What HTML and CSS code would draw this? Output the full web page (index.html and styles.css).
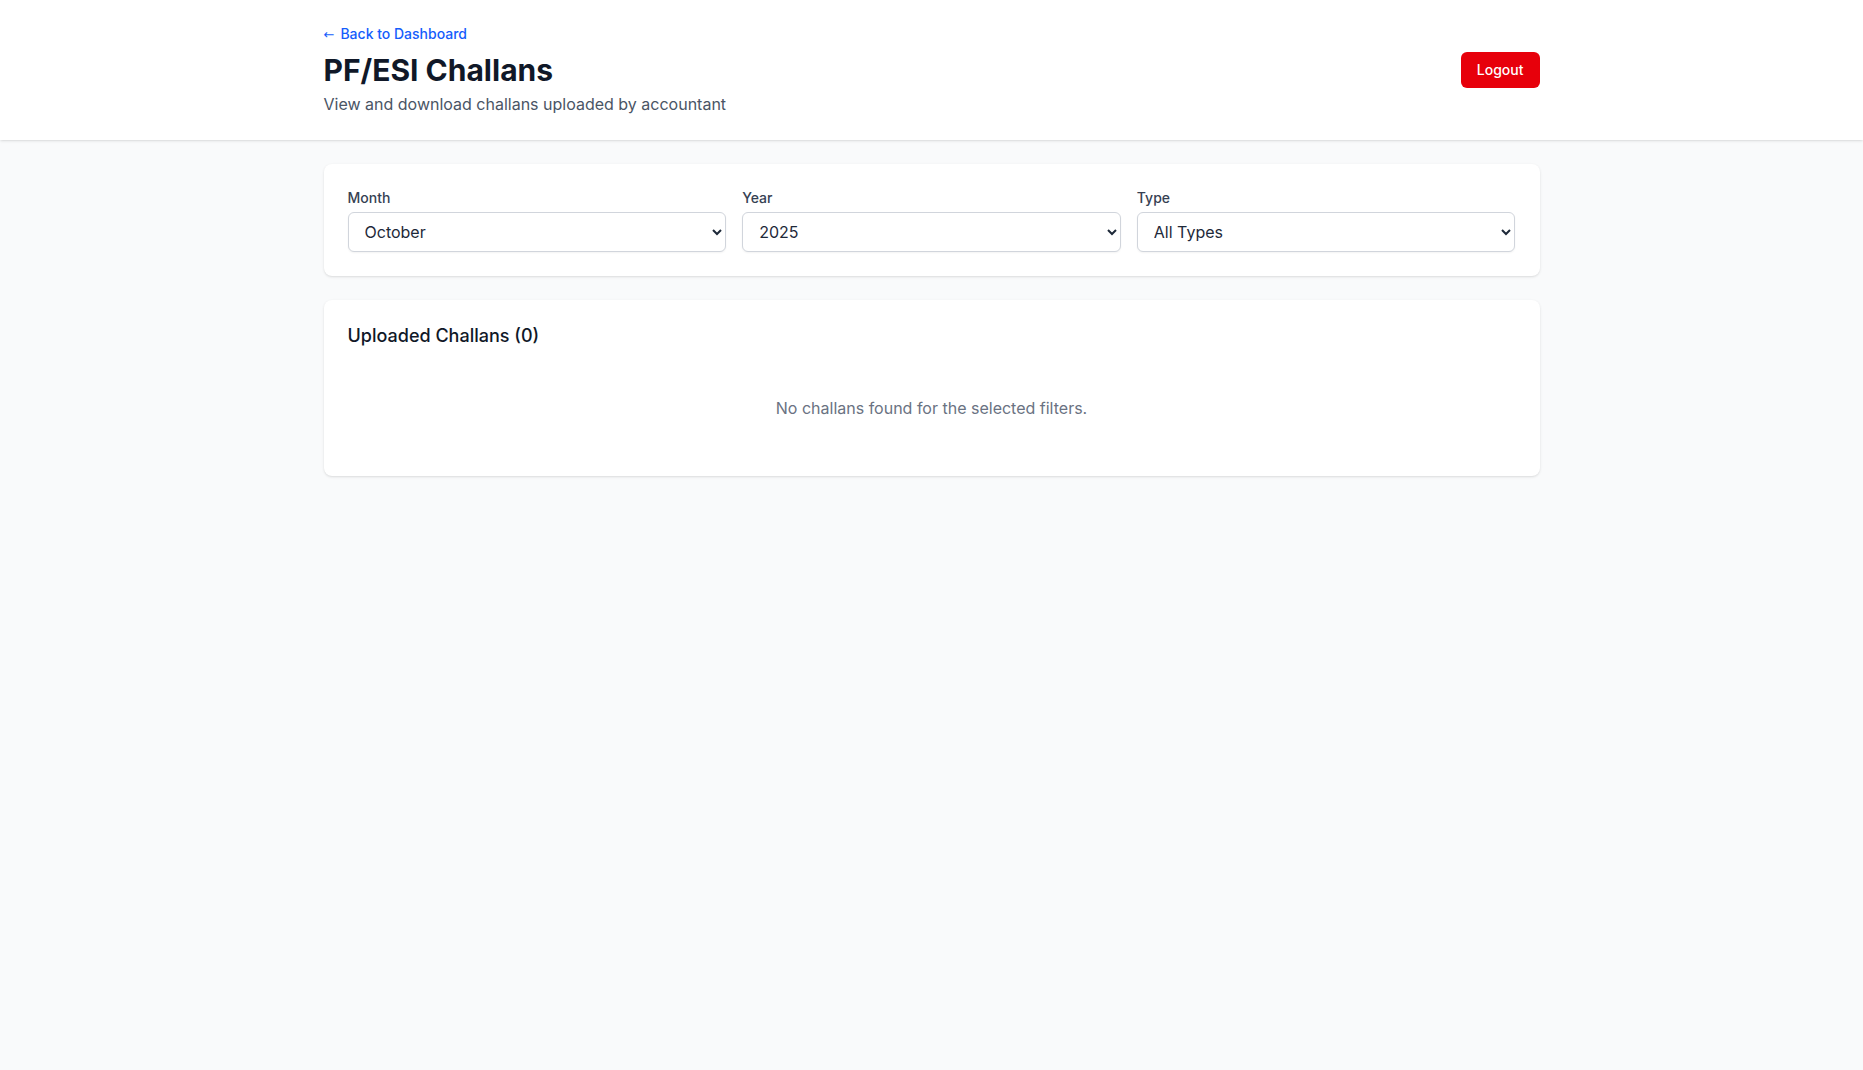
FILE: index.html
```html
<!DOCTYPE html>
<html lang="en">
<head>
<meta charset="utf-8">
<title>PF/ESI Challans</title>
<link rel="stylesheet" href="styles.css">
</head>
<body>
<header class="header">
  <div class="container header-inner">
    <div class="header-text">
      <a class="back-link" href="#"><span class="arrow">←</span> Back to Dashboard</a>
      <h1 class="title">PF/ESI Challans</h1>
      <p class="subtitle">View and download challans uploaded by accountant</p>
    </div>
    <button class="logout" type="button">Logout</button>
  </div>
</header>
<main class="container main">
  <section class="card filters">
    <div class="field">
      <label class="label" for="month">Month</label>
      <select id="month" class="select">
        <option>January</option><option>February</option><option>March</option>
        <option>April</option><option>May</option><option>June</option>
        <option>July</option><option>August</option><option>September</option>
        <option selected>October</option><option>November</option><option>December</option>
      </select>
    </div>
    <div class="field">
      <label class="label" for="year">Year</label>
      <select id="year" class="select">
        <option>2023</option><option>2024</option><option selected>2025</option><option>2026</option>
      </select>
    </div>
    <div class="field">
      <label class="label" for="type">Type</label>
      <select id="type" class="select">
        <option selected>All Types</option><option>PF</option><option>ESI</option>
      </select>
    </div>
  </section>
  <section class="card list">
    <h2 class="list-title">Uploaded Challans (0)</h2>
    <div class="empty">No challans found for the selected filters.</div>
  </section>
</main>
</body>
</html>
```
FILE: styles.css
```css
* { box-sizing: border-box; }
html, body { margin: 0; padding: 0; }
body {
  font-family: Inter, "Noto Sans", "Liberation Sans", sans-serif;
  background: #f9fafb;
  color: #101828;
  min-height: 100vh;
}
.container {
  max-width: 1280px;
  margin: 0 auto;
  padding-left: 32px;
  padding-right: 32px;
}
.header {
  background: #ffffff;
  box-shadow: 0 1px 3px 0 rgba(0,0,0,0.1), 0 1px 2px -1px rgba(0,0,0,0.1);
}
.header-inner {
  display: flex;
  align-items: center;
  justify-content: space-between;
  padding-top: 24px;
  padding-bottom: 24px;
}
.header-text { display: flex; flex-direction: column; }
.back-link {
  display: flex;
  align-items: center;
  gap: 6px;
  height: 20px;
  font-size: 14px;
  line-height: 20px;
  color: #155dfc;
  text-decoration: none;
  font-weight: 500;
}
.back-link .arrow {
  line-height: 20px;
  font-weight: 400;
  font-family: "DejaVu Sans", sans-serif;
  font-size: 13px;
  padding-top: 2px;
}
.title {
  margin: 8px 0 0;
  font-size: 30px;
  line-height: 36px;
  font-weight: 700;
  color: #101828;
}
.subtitle {
  margin: 4px 0 0;
  font-size: 16px;
  line-height: 24px;
  color: #4a5565;
}
.logout {
  background: #e7000b;
  color: #ffffff;
  border: none;
  border-radius: 6px;
  padding: 8px 16px;
  font-family: inherit;
  font-size: 14px;
  line-height: 20px;
  font-weight: 500;
  cursor: pointer;
}
.main {
  padding-top: 24px;
  padding-bottom: 24px;
}
.card {
  background: #ffffff;
  border-radius: 8px;
  box-shadow: 0 1px 3px 0 rgba(0,0,0,0.1), 0 1px 2px -1px rgba(0,0,0,0.1);
  padding: 24px;
}
.filters {
  display: grid;
  grid-template-columns: repeat(3, 1fr);
  gap: 16px;
  margin-bottom: 24px;
}
.field { display: flex; flex-direction: column; }
.label {
  font-size: 14px;
  line-height: 20px;
  font-weight: 500;
  color: #364153;
  margin-bottom: 4px;
}
.select {
  height: 40px;
  width: 100%;
  padding: 0 8px 0 12px;
  font-family: inherit;
  font-size: 16px;
  color: #1e2939;
  background: #ffffff;
  border: 1px solid #d1d5dc;
  border-radius: 6px;
  box-shadow: 0 1px 2px 0 rgba(0,0,0,0.05);
}
.list-title {
  margin: 0;
  font-size: 18px;
  line-height: 24px;
  font-weight: 500;
  color: #101828;
}
.empty {
  margin-top: 16px;
  padding: 32px 0;
  text-align: center;
  font-size: 16px;
  line-height: 24px;
  color: #6a7282;
}
```
